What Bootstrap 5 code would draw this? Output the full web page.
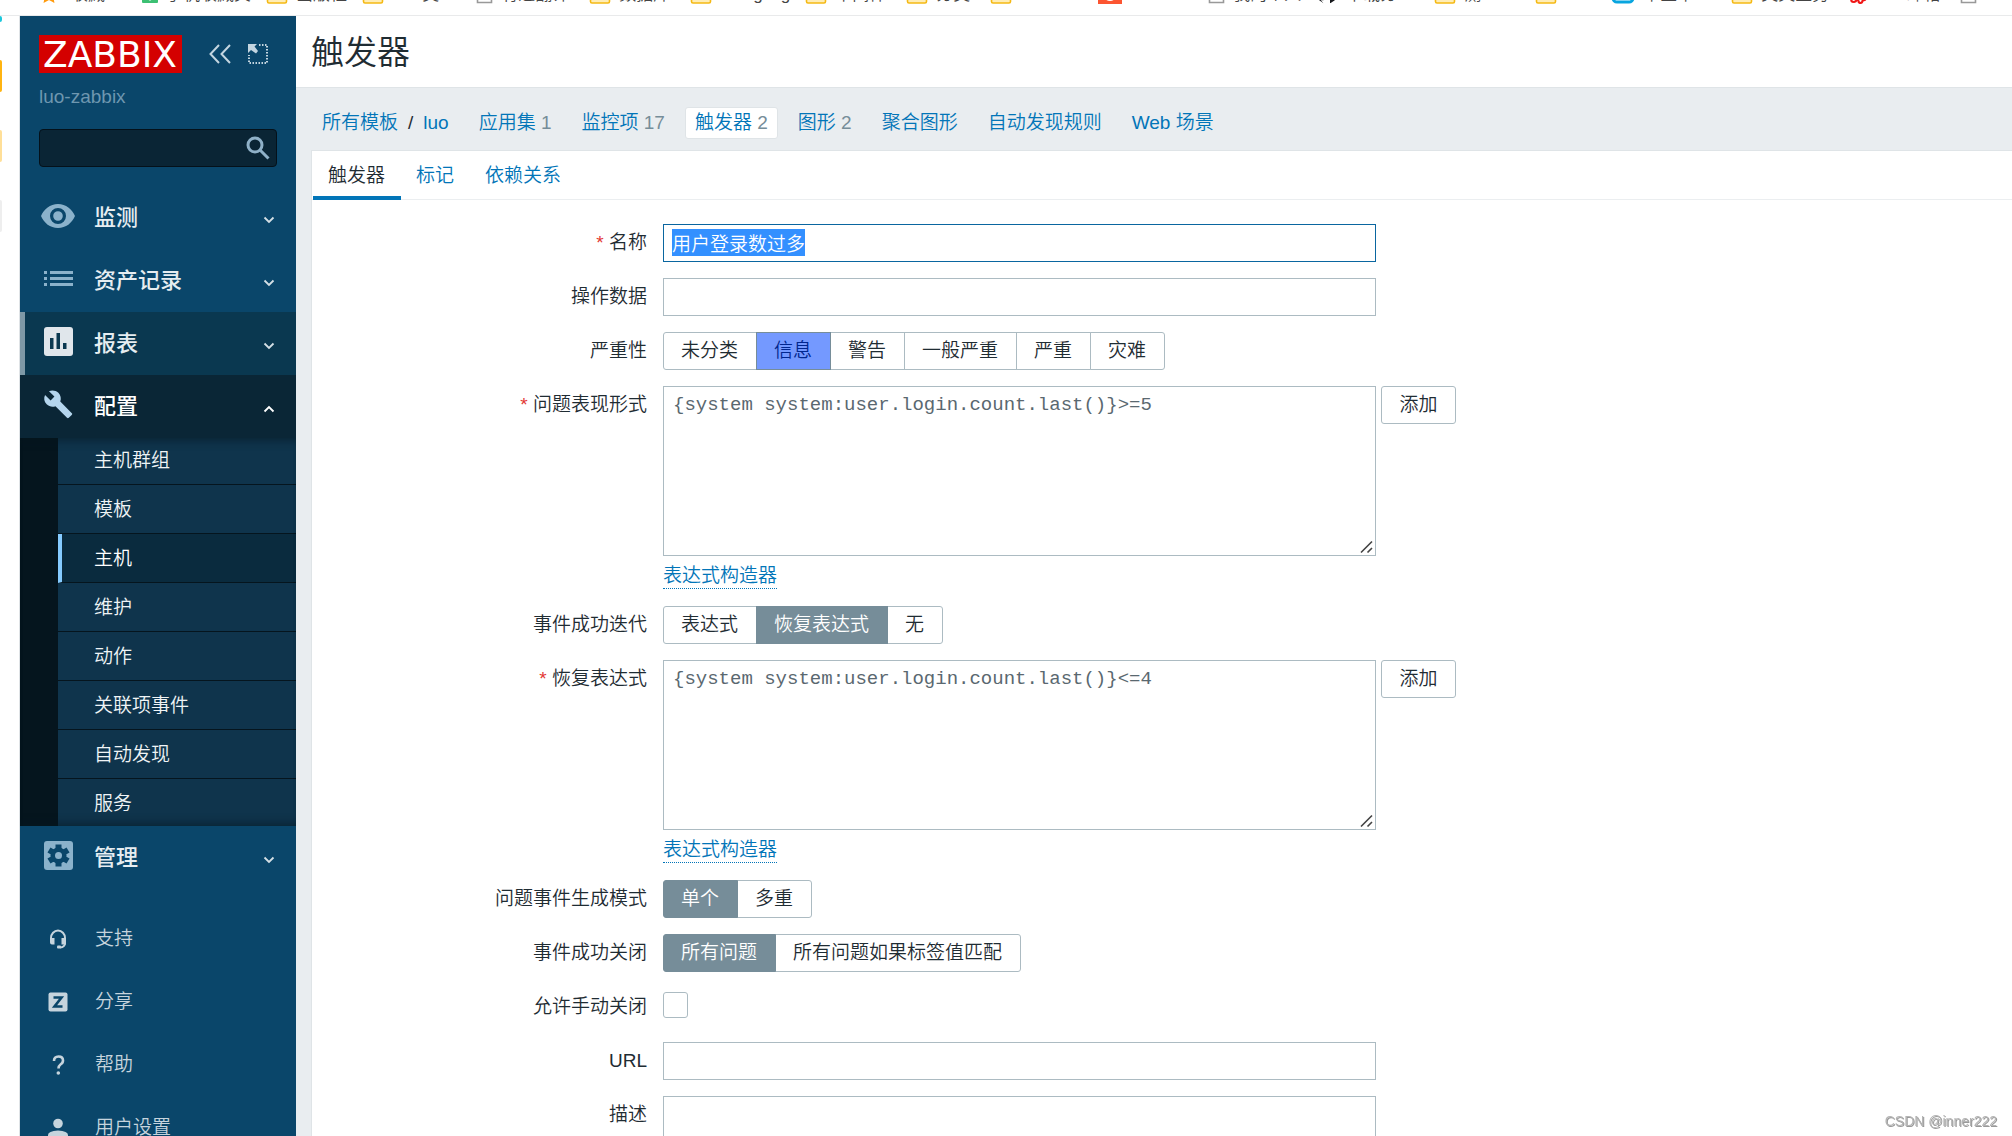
<!DOCTYPE html>
<html lang="zh-CN">
<head>
<meta charset="utf-8">
<meta name="viewport" content="width=device-width, initial-scale=1">
<title>触发器</title>
<link href="https://cdn.jsdelivr.net/npm/bootstrap@5.3.0/dist/css/bootstrap.min.css" rel="stylesheet">
<style>
  :root { --ink: #1f2c33; --blue: #0275b8; --line: #acbbc2; --slate: #768d99; --side: #0a466a; }
  body { font-family: "Liberation Sans", "Noto Sans CJK SC", sans-serif; font-size: 19px; line-height: 24px; color: var(--ink); font-weight: 350; background: #fff; }
  a { color: var(--blue); text-decoration: none; }
  .shell { height: 100vh; overflow: hidden; }

  /* browser bookmark strip */
  .bookmarks { height: 16px; padding: 0 0 11px 41px; border-bottom: 1px solid #e9eaeb; font-size: 17px; line-height: 18px; color: #444; white-space: nowrap; overflow: hidden; }
  .bookmarks > a { display: flex; align-items: flex-end; gap: 8px; color: #444; flex: none; margin-right: 20px; }
  .bookmarks .far { margin-right: 37px; }
  .bookmarks .near { margin-right: 15px; }
  .bookmarks .blank { margin-right: 86px; }
  .bookmarks .medium { margin-right: 54px; }
  .bookmarks svg { flex: none; }

  /* launcher strip at the left edge */
  .edge { width: 20px; border-right: 1px solid #dfe3e6; gap: 38px; }
  .edge span { width: 2px; height: 32px; border-radius: 0 3px 3px 0; }
  .edge .cy { background: #1bc8dc; height: 6px; }
  .edge .or { background: #ffb411; }
  .edge .lo { background: #ffdf98; }
  .edge .gy { background: #eee; }

  /* sidebar */
  .side { width: 276px; background: var(--side); color: #e1e9ee; }
  .side-top { padding: 19px 19px 19px; }
  .logo { background: #d40000; color: #fff; font: 36px/39px "DejaVu Sans", sans-serif; padding: 0 4px; height: 38px; width: 143px; }
  .side-tools { gap: 17px; padding: 0 9px 0 0; }
  .side-tools button { border: 0; background: none; padding: 0; display: flex; }
  .server { color: #6e97b0; margin: 12px 0 20px; }
  .searchbox { background: #0a2535; border: 1px solid #04111a; border-radius: 4px; height: 38px; padding-right: 6px; }
  .searchbox input { background: none; border: 0; min-width: 0; color: #fff; outline: 0; }
  .searchbox button { border: 0; background: none; padding: 0; display: flex; }
  .menu-row { height: 63px; padding: 0 21px; font-size: 22px; font-weight: 500; color: #e6edf1; }
  .menu-row > svg:first-child { margin-bottom: 4px; }
  .menu-row > svg:last-child { margin-top: 5px; }
  .menu-row span { flex: 1; padding-left: 19px; }
  .menu-row.reports { background: #0a3850; border-left: 5px solid #7e98a6; padding-left: 16px; }
  .menu-row.config { background: #0a2636; color: #fff; }
  .submenu { background: #05151e; padding-left: 38px; position: relative; }
  .submenu::after { content: ""; position: absolute; inset: 0; pointer-events: none; box-shadow: inset 0 10px 10px -8px rgba(5,21,30,.6), inset 0 -10px 10px -8px rgba(5,21,30,.6); }
  .submenu a { display: block; height: 49px; line-height: 49px; padding-left: 36px; background: #0f344c; border-bottom: 1px solid #05151e; color: #f0f4f6; }
  .submenu li:first-child a { height: 47px; line-height: 46px; }
  .submenu li:last-child a { height: 47px; border-bottom: 0; }
  .submenu a.current { background: #0a2b3e; border-left: 4px solid #85cbff; padding-left: 32px; color: #fff; }
  .userlinks { padding-top: 18px; }
  .userlinks a { height: 63px; padding-left: 28px; gap: 27px; color: #c6d4dd; }

  /* content */
  .content-area { background: #e9edf0; min-width: 0; }
  .page-head { height: 72px; background: #fff; border-bottom: 1px solid #dfe4e7; padding-left: 15px; }
  .page-head h1 { font-size: 33px; line-height: 73px; font-weight: 350; margin: 0; }
  .objects { height: 62px; padding: 8px 0 0 16px; }
  .objects a { padding: 0 9px; height: 32px; line-height: 30px; border: 1px solid transparent; margin-right: 10px; }
  .objects a.crumb { margin-right: 0; }
  .objects a.picked { background: #fff; border-color: #dfe4e7; border-radius: 3px; }
  .objects small { font-size: 19px; color: var(--slate); }
  .panel { margin-left: 15px; background: #fff; border-left: 1px solid #dfe4e7; border-top: 1px solid #dfe4e7; }
  .tabs { height: 49px; border-bottom: 1px solid #ebeef0; padding-left: 1px; }
  .tabs a { padding: 0 16px 0 15px; line-height: 50px; height: 49px; }
  .tabs a.active { color: var(--ink); border-bottom: 4px solid var(--blue); }

  .fields { padding-top: 24px; display: grid; gap: 16px; }
  .line { display: grid; grid-template-columns: 335px minmax(0, 1fr); column-gap: 16px; }
  .tag { text-align: right; line-height: 38px; height: 38px; }
  .tag.need::before { content: "* "; color: #e33734; }
  .box { width: 100%; max-width: 713px; height: 38px; border: 1px solid var(--line); padding: 0 8px 2px; outline: 0; color: var(--ink); background: #fff; display: block; font-weight: 350; }
  .box:focus { border-color: #0a66a0; }
  .box::selection { background: #3390ff; color: #fff; }
  textarea.box { height: 170px; padding: 6px 9px; font-family: "Liberation Mono", monospace; color: #5a6870; resize: vertical; }
  textarea.box::-webkit-resizer { background: url("data:image/svg+xml,%3Csvg xmlns='http://www.w3.org/2000/svg' width='15' height='15'%3E%3Cpath d='M1 12.500 12 1.500M7.500 12.500l4.500-4.500' stroke='%23444' stroke-width='1.600' fill='none'/%3E%3C/svg%3E") no-repeat; }
  .plus { width: 75px; height: 38px; flex: none; border: 1px solid var(--line); border-radius: 3px; background: #fff; color: var(--ink); padding: 0; font-weight: 350; }
  .with-plus { gap: 5px; }
  .builder { border: 0; background: none; padding: 0; color: var(--blue); border-bottom: 1px dotted var(--blue); line-height: 24px; margin: 8px 0 1px; font-weight: 350; }
  .seg label { border: 1px solid var(--line); padding: 0 18px 0 17px; height: 38px; line-height: 35px; margin-left: -1px; background: #fff; }
  .seg label:first-of-type { margin-left: 0; border-radius: 3px 0 0 3px; }
  .seg label:last-of-type { border-radius: 0 3px 3px 0; }
  .seg input:checked + label { background: var(--slate); border-color: var(--slate); color: #fff; position: relative; }
  .seg input:checked + label.info { background: #7499ff; color: #00268e; }
  .tick { appearance: none; width: 25px; height: 26px; border: 1px solid var(--line); border-radius: 3px; margin: 4px 0 8px; background: #fff; }
  .stamp { position: fixed; right: 15px; bottom: 6px; font-size: 14px; line-height: 18px; color: #b4b4b4; text-shadow: 1px 1px 0 #999; }
</style>
</head>
<body>
<svg class="d-none" xmlns="http://www.w3.org/2000/svg">
  <symbol id="folder" viewBox="0 0 22 18"><path d="M1.500 3a1.500 1.500 0 0 1 1.500-1.500h5l2 2.500h9a1.500 1.500 0 0 1 1.500 1.500V15.500a1.500 1.500 0 0 1-1.500 1.500H3a1.500 1.500 0 0 1-1.500-1.500z" fill="#ffedb5" stroke="#f5b914" stroke-width="1.600"/></symbol>
  <symbol id="sheet" viewBox="0 0 17 20"><path d="M1.500 1h9l5 5v12.500h-14z" fill="#fff" stroke="#999" stroke-width="1.600"/></symbol>
  <symbol id="down" viewBox="0 0 12 8"><path d="M1.500 1.500 6 6l4.500-4.500" fill="none" stroke="#d5e0e6" stroke-width="1.800"/></symbol>
</svg>
<div class="shell d-flex flex-column">
  <nav class="bookmarks d-flex align-items-end flex-shrink-0" aria-label="书签">
    <a href="#" class="far"><svg width="22" height="18" viewBox="0 0 22 18"><path d="m8 0 2.500 5.500 6 .7-4.400 4.100L13.500 17 8 14l-5.500 3 1.400-6.700L-.5 6.200l6-.7z" fill="#ff9a0c"/></svg>收藏</a>
    <a href="#" class="near"><svg width="16" height="18"><rect width="16" height="17" rx="1" fill="#3cc073"/><circle cx="8" cy="13" r="1.500" fill="#fff"/></svg>手机收藏夹</a>
    <a href="#" class="near"><svg width="22" height="18"><use href="#folder"/></svg>出版社</a>
    <a href="#" class="far"><svg width="22" height="18"><use href="#folder"/></svg>VIM类</a>
    <a href="#"><svg width="17" height="20"><use href="#sheet"/></svg>有道翻译</a>
    <a href="#"><svg width="22" height="18"><use href="#folder"/></svg>数据库</a>
    <a href="#" class="near"><svg width="22" height="18"><use href="#folder"/></svg>Mongo lg</a>
    <a href="#"><svg width="22" height="18"><use href="#folder"/></svg>中间件</a>
    <a href="#"><svg width="22" height="18"><use href="#folder"/></svg>分类</a>
    <a href="#" class="blank"><svg width="22" height="18"><use href="#folder"/></svg></a>
    <a href="#" class="blank"><svg width="24" height="21"><rect width="24" height="21" fill="#fc5531"/><circle cx="12" cy="11" r="7" fill="#fff"/></svg></a>
    <a href="#" class="near"><svg width="17" height="20"><use href="#sheet"/></svg>我的个人</a>
    <a href="#" class="far"><svg width="22" height="21" viewBox="0 0 22 21"><circle cx="11" cy="10" r="10.500" fill="#16181c"/><path d="M8 21v-4q-4 1-5-2M14 21v-5q5-1 5-6 0-3-2-4-3-1-6-1T5 6Q3 7 3 10q0 5 5 6v5z" fill="#fff"/></svg>下载分</a>
    <a href="#" class="medium"><svg width="22" height="18"><use href="#folder"/></svg>测</a>
    <a href="#" class="medium"><svg width="22" height="18"><use href="#folder"/></svg></a>
    <a href="#" class="far"><svg width="24" height="19"><rect x="2" y="2" width="20" height="15" rx="4" fill="#fff" stroke="#08a5df" stroke-width="3"/></svg>平金平</a>
    <a href="#"><svg width="22" height="18"><use href="#folder"/></svg>英文业务</a>
    <a href="#" class="far"><svg width="20" height="19" viewBox="0 0 20 19"><path d="M3 13q-2 4 2 4 4-1 2-5M10 10q-2 7 1 8 4 0 2-7M17 8q1 8-3 7" fill="none" stroke="#f01616" stroke-width="2.200"/></svg></a>
    <a href="#">邮箱</a>
    <a href="#"><svg width="17" height="20"><use href="#sheet"/></svg></a>
  </nav>

  <div class="d-flex flex-fill align-items-start">
    <div class="edge d-flex flex-column align-self-stretch flex-shrink-0"><span class="cy"></span><span class="or"></span><span class="lo"></span><span class="gy"></span></div>

    <aside class="side flex-shrink-0">
      <div class="side-top">
        <div class="d-flex justify-content-between align-items-center">
          <div class="logo">ZABBIX</div>
          <div class="side-tools d-flex align-items-center">
            <button type="button" aria-label="收起侧栏"><svg width="22" height="20" viewBox="0 0 22 20" fill="none" stroke="#c3d5e0" stroke-width="2"><path d="M10 1 1.500 10l8.500 9M21 1l-8.500 9 8.500 9"/></svg></button>
            <button type="button" aria-label="隐藏侧栏"><svg width="20" height="20" viewBox="0 0 20 20"><path d="M11 1h8v18H1V11" fill="none" stroke="#c3d5e0" stroke-width="2" stroke-dasharray="1.500 1.500"/><path d="M0 0h9L6.500 2.500 10 7 8 9.500 3 6 0 9z" fill="#c3d5e0"/></svg></button>
          </div>
        </div>
        <div class="server">luo-zabbix</div>
        <form class="searchbox d-flex align-items-center" onsubmit="return false">
          <input class="flex-fill" type="text" aria-label="搜索">
          <button aria-label="搜索"><svg width="24" height="24" viewBox="0 0 24 24" fill="none" stroke="#8fb1c8" stroke-width="3"><circle cx="9" cy="9" r="7"/><path d="m14 14 8.500 8.500"/></svg></button>
        </form>
      </div>
      <nav aria-label="主菜单">
        <a class="menu-row d-flex align-items-center" href="#"><svg width="34" height="34" viewBox="0 0 34 34"><path fill-rule="evenodd" fill="#8bb2cb" d="M17 5C9 5 3 10 0 17c3 7 9 12 17 12s14-5 17-12C31 10 25 5 17 5zm0 20a8 8 0 1 1 0-16 8 8 0 0 1 0 16zm0-3.200a4.800 4.800 0 1 0 0-9.600 4.800 4.800 0 0 0 0 9.600z"/></svg><span>监测</span><svg width="12" height="8"><use href="#down"/></svg></a>
        <a class="menu-row d-flex align-items-center" href="#"><svg width="34" height="34" viewBox="0 0 34 34" fill="#8bb2cb"><path d="M3 9h3v3H3zM9 9h23v3H9zM3 15h3v3H3zM9 15h23v3H9zM3 21h3v3H3zM9 21h23v3H9z"/></svg><span>资产记录</span><svg width="12" height="8"><use href="#down"/></svg></a>
        <a class="menu-row reports d-flex align-items-center" href="#"><svg width="34" height="34" viewBox="0 0 34 34"><rect x="3" y="2" width="29" height="29" rx="3" fill="#e0e6eb"/><path d="M9 13h3.500v11H9zM15.500 8H19v16h-3.500zM22 18h3.500v6H22z" fill="#0a3850"/></svg><span>报表</span><svg width="12" height="8"><use href="#down"/></svg></a>
        <a class="menu-row config d-flex align-items-center" href="#"><svg width="34" height="34" viewBox="0 0 34 34"><path transform="translate(2 1) scale(1.270)" fill="#b4d5ed" d="M22.700 19l-9.100-9.100c.9-2.300.4-5-1.500-6.900-2-2-5-2.400-7.400-1.300L9 6 6 9 1.600 4.700C.4 7.100.9 10.100 2.900 12.100c1.900 1.900 4.600 2.400 6.900 1.500l9.100 9.100c.4.400 1 .4 1.400 0l2.300-2.300c.5-.4.5-1.100.1-1.400z"/></svg><span>配置</span><svg width="12" height="8" viewBox="0 0 12 8"><path d="M1.500 6.500 6 2l4.500 4.500" fill="none" stroke="#fff" stroke-width="1.800"/></svg></a>
        <ul class="submenu list-unstyled mb-0">
          <li><a href="#">主机群组</a></li>
          <li><a href="#">模板</a></li>
          <li><a href="#" class="current">主机</a></li>
          <li><a href="#">维护</a></li>
          <li><a href="#">动作</a></li>
          <li><a href="#">关联项事件</a></li>
          <li><a href="#">自动发现</a></li>
          <li><a href="#">服务</a></li>
        </ul>
        <a class="menu-row d-flex align-items-center" href="#"><svg width="34" height="34" viewBox="0 0 34 34"><rect x="3" y="2" width="29" height="29" rx="3" fill="#8bb2cb"/><g fill="#0a466a"><circle cx="17.500" cy="16.500" r="8"/><path id="tooth" d="M14.500 5.500h6v22h-6z"/><use href="#tooth" transform="rotate(60 17.500 16.500)"/><use href="#tooth" transform="rotate(120 17.500 16.500)"/></g><circle cx="17.500" cy="16.500" r="3.500" fill="#8bb2cb"/></svg><span>管理</span><svg width="12" height="8"><use href="#down"/></svg></a>
      </nav>
      <nav class="userlinks" aria-label="用户">
        <a class="d-flex align-items-center" href="#"><svg width="20" height="20" viewBox="0 0 20 20"><path d="M3 11V9a7 7.500 0 0 1 14 0v5q0 4-5 4.500" fill="none" stroke="#c6d4dd" stroke-width="2"/><path d="M2 9h4.500v6.500H4q-2 0-2-2zM18 9h-4.500v6.500H18z" fill="#c6d4dd"/><rect x="9" y="16.500" width="4" height="3" rx="1" fill="#c6d4dd"/></svg>支持</a>
        <a class="d-flex align-items-center" href="#"><svg width="20" height="20" viewBox="0 0 20 20"><rect x=".5" y=".5" width="19" height="19" rx="2" fill="#c6d4dd"/><path d="M5.500 5.500h8L6.500 14.500h8" fill="none" stroke="#0a466a" stroke-width="2.600"/></svg>分享</a>
        <a class="d-flex align-items-center" href="#"><svg width="20" height="20" viewBox="0 0 20 20"><path d="M6 6q0-4.500 4.500-4.500T15 5.500q0 2.500-2.500 4-2 1.500-2 4" fill="none" stroke="#c6d4dd" stroke-width="2.600"/><circle cx="10.300" cy="18" r="1.800" fill="#c6d4dd"/></svg>帮助</a>
        <a class="d-flex align-items-center" href="#"><svg width="20" height="20" viewBox="0 0 20 20" fill="#c6d4dd"><circle cx="10" cy="5.500" r="4.800"/><path d="M0 20v-3q0-4 10-4.500 10 .5 10 4.500v3z"/></svg>用户设置</a>
      </nav>
    </aside>

    <main class="content-area flex-fill">
      <header class="page-head"><h1>触发器</h1></header>
      <nav class="objects d-flex align-items-center" aria-label="模板对象">
        <a href="#" class="crumb">所有模板</a><span>/</span><a href="#">luo</a>
        <a href="#">应用集 <small>1</small></a>
        <a href="#">监控项 <small>17</small></a>
        <a href="#" class="picked">触发器 <small>2</small></a>
        <a href="#">图形 <small>2</small></a>
        <a href="#">聚合图形</a>
        <a href="#">自动发现规则</a>
        <a href="#">Web 场景</a>
      </nav>
      <section class="panel">
        <nav class="tabs d-flex" aria-label="选项卡"><a href="#" class="active">触发器</a><a href="#">标记</a><a href="#">依赖关系</a></nav>
        <form class="fields" onsubmit="return false">
          <div class="line"><label class="tag need" for="name">名称</label><div><input id="name" class="box" type="text" value="用户登录数过多" autofocus></div></div>
          <div class="line"><label class="tag" for="opdata">操作数据</label><div><input id="opdata" class="box" type="text"></div></div>
          <div class="line"><span class="tag" id="sev">严重性</span>
            <div class="seg d-flex" role="radiogroup" aria-labelledby="sev">
              <input class="btn-check" type="radio" name="sev" id="s0"><label for="s0">未分类</label>
              <input class="btn-check" type="radio" name="sev" id="s1" checked><label class="info" for="s1">信息</label>
              <input class="btn-check" type="radio" name="sev" id="s2"><label for="s2">警告</label>
              <input class="btn-check" type="radio" name="sev" id="s3"><label for="s3">一般严重</label>
              <input class="btn-check" type="radio" name="sev" id="s4"><label for="s4">严重</label>
              <input class="btn-check" type="radio" name="sev" id="s5"><label for="s5">灾难</label>
            </div></div>
          <div class="line"><label class="tag need" for="expr">问题表现形式</label>
            <div><div class="with-plus d-flex"><textarea id="expr" class="box" spellcheck="false">{system system:user.login.count.last()}&gt;=5</textarea><button type="button" class="plus">添加</button></div>
            <button type="button" class="builder">表达式构造器</button></div></div>
          <div class="line"><span class="tag" id="okgen">事件成功迭代</span>
            <div class="seg d-flex" role="radiogroup" aria-labelledby="okgen">
              <input class="btn-check" type="radio" name="ok" id="o0"><label for="o0">表达式</label>
              <input class="btn-check" type="radio" name="ok" id="o1" checked><label for="o1">恢复表达式</label>
              <input class="btn-check" type="radio" name="ok" id="o2"><label for="o2">无</label>
            </div></div>
          <div class="line"><label class="tag need" for="rec">恢复表达式</label>
            <div><div class="with-plus d-flex"><textarea id="rec" class="box" spellcheck="false">{system system:user.login.count.last()}&lt;=4</textarea><button type="button" class="plus">添加</button></div>
            <button type="button" class="builder">表达式构造器</button></div></div>
          <div class="line"><span class="tag" id="mode">问题事件生成模式</span>
            <div class="seg d-flex" role="radiogroup" aria-labelledby="mode">
              <input class="btn-check" type="radio" name="mode" id="m0" checked><label for="m0">单个</label>
              <input class="btn-check" type="radio" name="mode" id="m1"><label for="m1">多重</label>
            </div></div>
          <div class="line"><span class="tag" id="close">事件成功关闭</span>
            <div class="seg d-flex" role="radiogroup" aria-labelledby="close">
              <input class="btn-check" type="radio" name="close" id="c0" checked><label for="c0">所有问题</label>
              <input class="btn-check" type="radio" name="close" id="c1"><label for="c1">所有问题如果标签值匹配</label>
            </div></div>
          <div class="line"><label class="tag" for="manual">允许手动关闭</label><div class="d-flex"><input id="manual" class="tick" type="checkbox"></div></div>
          <div class="line"><label class="tag" for="url">URL</label><div><input id="url" class="box" type="text"></div></div>
          <div class="line"><label class="tag" for="desc">描述</label><div><textarea id="desc" class="box"></textarea></div></div>
        </form>
      </section>
    </main>
  </div>
</div>
<div class="stamp">CSDN @inner222</div>
<script src="https://cdn.jsdelivr.net/npm/bootstrap@5.3.0/dist/js/bootstrap.bundle.min.js"></script>
<script>
  const nameField = document.getElementById('name');
  nameField.focus({ preventScroll: true });
  nameField.select();
</script>
</body>
</html>
